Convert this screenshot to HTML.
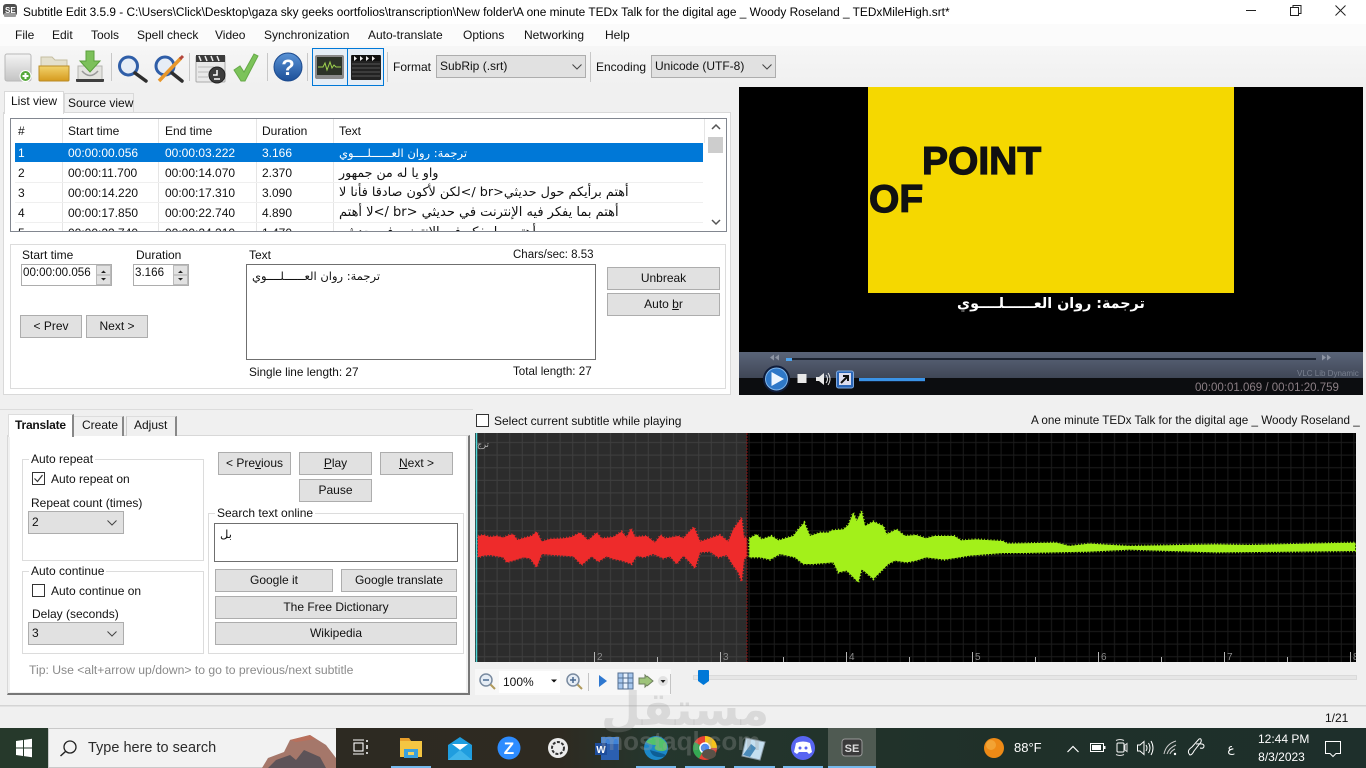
<!DOCTYPE html>
<html><head><meta charset="utf-8"><title>Subtitle Edit</title>
<style>
html,body{margin:0;padding:0;width:1366px;height:768px;overflow:hidden;background:#f0f0f0}
body{position:relative;font-family:"Liberation Sans","DejaVu Sans",sans-serif;font-size:12px;color:#111}
.a{position:absolute}
.t{position:absolute;white-space:nowrap;line-height:16px}
.b{position:absolute;background:#e1e1e1;border:1px solid #adadad;box-sizing:border-box;text-align:center;line-height:21px;white-space:nowrap}
.c{position:absolute;background:#e1e1e1;border:1px solid #adadad;box-sizing:border-box;line-height:20px;padding-left:3px;white-space:nowrap}
.c svg{position:absolute;right:6px;top:8px}
.g{position:absolute;border:1px solid #dcdcdc;box-sizing:border-box}
.g span{position:absolute;left:8px;top:-8px;background:#fff;padding:0 2px;line-height:14px;white-space:nowrap}
.sep{position:absolute;width:1px;background:#c8c8c8}
.r{position:absolute;left:4px;width:688px;height:20px;border-bottom:1px solid #efefef;box-sizing:border-box}
.r span{position:absolute;top:2px;line-height:16px;white-space:nowrap}
.ar{font-family:"DejaVu Sans",sans-serif;font-size:11.5px;direction:rtl;unicode-bidi:plaintext}
.m{position:absolute;top:27px;line-height:16px;white-space:nowrap}
svg{position:absolute;overflow:visible}
.ul{position:absolute;top:766px;height:2px;background:#76b9ed}
</style></head><body>

<!-- title bar -->
<div class="a" style="left:0;top:0;width:1366px;height:24px;background:#fff"></div>
<svg style="left:0;top:0" width="24" height="24"><rect x="3" y="4" width="14" height="12" rx="3" fill="#4e4e4e"/><rect x="4" y="13" width="12" height="4" rx="1" fill="#9a9a9a"/><text x="5" y="13" font-size="8" font-weight="bold" fill="#fff" font-family="Liberation Sans">SE</text></svg>
<div class="t" style="left:23px;top:4px;font-size:11.87px;color:#000">Subtitle Edit 3.5.9 - C:\Users\Click\Desktop\gaza sky geeks oortfolios\transcription\New folder\A one minute TEDx Talk for the digital age _ Woody Roseland _ TEDxMileHigh.srt*</div>
<svg style="left:1240px;top:0" width="126" height="24" fill="none" stroke="#222" stroke-width="1"><path d="M6 10.500H16"/><rect x="50.500" y="7.500" width="8" height="8"/><path d="M53 7.500V5.500H61V13.500H58.500"/><path d="M95.500 5.500L105.500 15.500M105.500 5.500L95.500 15.500"/></svg>

<!-- menu -->
<div class="a" style="left:0;top:24px;width:1366px;height:22px;background:#fbfbfb"></div>
<span class="m" style="left:15px">File</span><span class="m" style="left:52px">Edit</span><span class="m" style="left:91px">Tools</span><span class="m" style="left:137px">Spell check</span><span class="m" style="left:215px">Video</span><span class="m" style="left:264px">Synchronization</span><span class="m" style="left:368px">Auto-translate</span><span class="m" style="left:463px">Options</span><span class="m" style="left:524px">Networking</span><span class="m" style="left:605px">Help</span>

<!-- toolbar -->
<div class="a" style="left:0;top:46px;width:1366px;height:41px;background:linear-gradient(#f6f6f6,#f0f0f0)"></div>
<svg style="left:0;top:46px" width="400" height="41">
<defs>
<linearGradient id="gd" x1="0" y1="0" x2="0" y2="1"><stop offset="0" stop-color="#f4f4f4"/><stop offset="1" stop-color="#c4c4c4"/></linearGradient>
<linearGradient id="fo" x1="0" y1="0" x2="0" y2="1"><stop offset="0" stop-color="#f2d36c"/><stop offset="1" stop-color="#d59a1e"/></linearGradient>
<linearGradient id="bl" x1="0" y1="0" x2="0" y2="1"><stop offset="0" stop-color="#5a93d6"/><stop offset="1" stop-color="#1c4f98"/></linearGradient>
</defs>
<rect x="5" y="8" width="26" height="27" rx="2" fill="url(#gd)" stroke="#b8b8b8"/>
<circle cx="25.500" cy="30" r="5.500" fill="#55a83a" stroke="#fff"/><path d="M25.500 27V33M22.500 30H28.500" stroke="#fff" stroke-width="2"/>
<path d="M41 11H52L55 14H67V20H41Z" fill="#e4e0cd" stroke="#c5bea1"/>
<path d="M39 20H69V34Q69 35 68 35H40Q39 35 39 34Z" fill="url(#fo)" stroke="#b98c26"/>
<path d="M78 20H102V34H78Z" fill="#e3e3df" stroke="#b5b5b0"/>
<path d="M76 33H104V35Q104 36 103 36H77Q76 36 76 35Z" fill="#3f3f3f"/>
<path d="M82 25Q90 34 98 25" fill="none" stroke="#999" stroke-width="1.500"/>
<path d="M86 5H94V15H100L90 26L80 15H86Z" fill="#7cc05a" stroke="#5a9f3c"/>
<circle cx="128.500" cy="20" r="9" fill="#dfeaf7" fill-opacity=".7" stroke="#2f5ea8" stroke-width="3"/>
<path d="M135 27L146 35" stroke="#2e2e2e" stroke-width="3.500" stroke-linecap="round"/>
<circle cx="165" cy="20" r="9" fill="#dfeaf7" fill-opacity=".7" stroke="#2f5ea8" stroke-width="3"/>
<path d="M172 27L182 35" stroke="#2e2e2e" stroke-width="3.500" stroke-linecap="round"/>
<path d="M159 35L181 12" stroke="#e8972b" stroke-width="3.500"/><path d="M180 13L183 10" stroke="#b3463c" stroke-width="3"/>
<rect x="196" y="10" width="29" height="26" rx="1" fill="#e9e9e9" stroke="#aaa"/>
<rect x="196" y="9" width="29" height="7" fill="#3b3b3b"/>
<path d="M199 10l2 5M205 10l2 5M211 10l2 5M217 10l2 5" stroke="#eee" stroke-width="1.500"/>
<path d="M198 21h16M198 26h12M198 31h10" stroke="#bbb"/>
<circle cx="217" cy="29" r="8" fill="#3d3d3d" stroke="#222"/><path d="M217 24V29H213M214 33H220" stroke="#fff" stroke-width="1.500" fill="none"/>
<path d="M234 24L240 20L244 26L254 8L258 10L245 35H241Z" fill="#7cc35a" stroke="#66a948"/>
<circle cx="288" cy="21" r="14" fill="url(#bl)" stroke="#1d4b8e"/>
<text x="288" y="29" font-size="22" font-weight="bold" fill="#fff" text-anchor="middle" font-family="Liberation Sans">?</text>
<rect x="312.500" y="2.500" width="35" height="37" fill="#e6eef6" stroke="#0078d7"/>
<rect x="347.500" y="2.500" width="36" height="37" fill="#e6eef6" stroke="#0078d7"/>
<rect x="315" y="9" width="29" height="24" rx="2" fill="#8a8a8a"/>
<rect x="317" y="11" width="25" height="18" fill="#2d3328"/>
<path d="M318 21H323L325 17L327 24L330 16L332 22L334 19L336 21H341" fill="none" stroke="#9fd34e"/>
<rect x="351" y="9" width="30" height="25" rx="1" fill="#222"/>
<rect x="352" y="9" width="28" height="6" fill="#111"/>
<path d="M354 10l3 2.500l-3 2.500M360 10l3 2.500l-3 2.500M366 10l3 2.500l-3 2.500M372 10l3 2.500l-3 2.500" fill="#eee"/>
<path d="M352 18H380M352 22H380M352 26H380M352 30H380" stroke="#555"/>
</svg>
<div class="sep" style="left:111px;top:53px;height:28px"></div><div class="sep" style="left:189px;top:53px;height:28px"></div><div class="sep" style="left:267px;top:53px;height:28px"></div><div class="sep" style="left:307px;top:53px;height:28px"></div><div class="sep" style="left:387px;top:52px;height:30px"></div><div class="sep" style="left:590px;top:52px;height:30px"></div>
<div class="t" style="left:393px;top:59px">Format</div>
<div class="c" style="left:436px;top:55px;width:150px;height:23px">SubRip (.srt)<svg style="right:auto;left:135px;top:8px" width="10" height="6"><path d="M0.500 0.500L5 5L9.500 0.500" fill="none" stroke="#444"/></svg></div>
<div class="t" style="left:596px;top:59px">Encoding</div>
<div class="c" style="left:651px;top:55px;width:125px;height:23px">Unicode (UTF-8)<svg style="right:auto;left:110px;top:8px" width="10" height="6"><path d="M0.500 0.500L5 5L9.500 0.500" fill="none" stroke="#444"/></svg></div>

<!-- list panel -->
<div class="a" style="left:3px;top:112px;width:728px;height:283px;background:#fff;border:1px solid #d9d9d9;box-sizing:border-box"></div>
<div class="a" style="left:64px;top:93px;width:70px;height:20px;background:#f0f0f0;border:1px solid #d9d9d9;box-sizing:border-box"></div>
<div class="a" style="left:4px;top:91px;width:60px;height:23px;background:#fff;border:1px solid #d9d9d9;border-bottom:0;box-sizing:border-box"></div>
<div class="t" style="left:11px;top:93px">List view</div>
<div class="t" style="left:68px;top:95px">Source view</div>

<div class="a" style="left:10px;top:118px;width:717px;height:114px;background:#fff;border:1px solid #828790;box-sizing:border-box;overflow:hidden">
 <div class="a" style="left:51px;top:0;width:1px;height:112px;background:#e5e5e5"></div>
 <div class="a" style="left:147px;top:0;width:1px;height:112px;background:#e5e5e5"></div>
 <div class="a" style="left:245px;top:0;width:1px;height:112px;background:#e5e5e5"></div>
 <div class="a" style="left:322px;top:0;width:1px;height:112px;background:#e5e5e5"></div>
 <div class="a" style="left:693px;top:0;width:1px;height:24px;background:#e5e5e5"></div>
 <span class="t" style="left:7px;top:4px">#</span><span class="t" style="left:57px;top:4px">Start time</span><span class="t" style="left:154px;top:4px">End time</span><span class="t" style="left:251px;top:4px">Duration</span><span class="t" style="left:328px;top:4px">Text</span>
 <div class="r" style="top:24px;background:#0078d7;color:#fff;border:0;height:19px"><span style="left:3px">1</span><span style="left:53px">00:00:00.056</span><span style="left:150px">00:00:03.222</span><span style="left:247px">3.166</span><span class="ar" style="left:324px">ترجمة: روان العــــــلــــوي</span></div>
 <div class="r" style="top:44px"><span style="left:3px">2</span><span style="left:53px">00:00:11.700</span><span style="left:150px">00:00:14.070</span><span style="left:247px">2.370</span><span class="ar" style="left:324px;font-size:12.600px">واو يا له من جمهور</span></div>
 <div class="r" style="top:64px"><span style="left:3px">3</span><span style="left:53px">00:00:14.220</span><span style="left:150px">00:00:17.310</span><span style="left:247px">3.090</span><span class="ar" style="left:324px;font-size:12.800px">أهتم برأيكم حول حديثي&lt;br /&gt;لكن لأكون صادقا فأنا لا</span></div>
 <div class="r" style="top:84px"><span style="left:3px">4</span><span style="left:53px">00:00:17.850</span><span style="left:150px">00:00:22.740</span><span style="left:247px">4.890</span><span class="ar" style="left:324px;font-size:13px">أهتم بما يفكر فيه الإنترنت في حديثي &lt;br /&gt;لا أهتم</span></div>
 <div class="r" style="top:104px;border:0"><span style="left:3px">5</span><span style="left:53px">00:00:22.740</span><span style="left:150px">00:00:24.210</span><span style="left:247px">1.470</span><span class="ar" style="left:324px;font-size:13px">أهتم بما يفكر فيه الإنترنت في حديثي</span></div>
 <div class="a" style="left:697px;top:18px;width:15px;height:16px;background:#cdcdcd"></div>
 <svg style="left:700px;top:5px" width="10" height="6"><path d="M1 5L5 1L9 5" fill="none" stroke="#555" stroke-width="1.500"/></svg>
 <svg style="left:700px;top:100px" width="10" height="6"><path d="M1 1L5 5L9 1" fill="none" stroke="#555" stroke-width="1.500"/></svg>
</div>

<!-- edit panel -->
<div class="a" style="left:10px;top:244px;width:716px;height:145px;border:1px solid #dcdcdc;box-sizing:border-box"></div>
<div class="t" style="left:22px;top:247px">Start time</div>
<div class="t" style="left:136px;top:247px">Duration</div>
<div class="a" style="left:21px;top:264px;width:91px;height:22px;background:#fff;border:1px solid #adadad;box-sizing:border-box"></div>
<div class="t" style="left:23px;top:265px;font-size:11.600px">00:00:00.056</div>
<div class="a" style="left:96px;top:265px;width:15px;height:20px;background:#e1e1e1;border:1px solid #bbb;box-sizing:border-box"></div>
<div class="a" style="left:133px;top:264px;width:56px;height:22px;background:#fff;border:1px solid #adadad;box-sizing:border-box"></div>
<div class="t" style="left:135px;top:265px;font-size:11.600px">3.166</div>
<div class="a" style="left:173px;top:265px;width:15px;height:20px;background:#e1e1e1;border:1px solid #bbb;box-sizing:border-box"></div>
<svg style="left:96px;top:265px" width="92" height="20"><path d="M7.500 5.500L5 8H10ZM7.500 15.500L5 13H10ZM84.500 5.500L82 8H87ZM84.500 15.500L82 13H87Z" fill="#222"/><path d="M1 10H14M78 10H91" stroke="#aaa"/></svg>
<div class="b" style="left:20px;top:315px;width:62px;height:23px">&lt; Prev</div>
<div class="b" style="left:86px;top:315px;width:62px;height:23px">Next &gt;</div>
<div class="t" style="left:249px;top:247px">Text</div>
<div class="t" style="left:513px;top:247px;font-size:11.500px">Chars/sec: 8.53</div>
<div class="a" style="left:246px;top:264px;width:350px;height:96px;background:#fff;border:1px solid #6f6f6f;box-sizing:border-box"></div>
<div class="t ar" style="left:252px;top:268px">ترجمة: روان العــــــلــــوي</div>
<div class="t" style="left:249px;top:364px;font-size:11.800px">Single line length: 27</div>
<div class="t" style="left:513px;top:364px;font-size:11.600px">Total length: 27</div>
<div class="b" style="left:607px;top:267px;width:113px;height:23px">Unbreak</div>
<div class="b" style="left:607px;top:293px;width:113px;height:23px">Auto <u>b</u>r</div>

<!-- video -->
<div class="a" style="left:739px;top:87px;width:624px;height:308px;background:#000"></div>
<div class="a" style="left:868px;top:87px;width:366px;height:206px;background:#f5d800"></div>
<div class="t" style="left:922px;top:141px;font:900 39px/42px 'Liberation Sans',sans-serif;color:#111;-webkit-text-stroke:1.200px #111">POINT</div>
<div class="t" style="left:869px;top:179px;font:900 39px/42px 'Liberation Sans',sans-serif;color:#111;-webkit-text-stroke:1.200px #111">OF</div>
<div class="t" style="left:957px;top:293px;font:bold 14.300px/22px 'DejaVu Sans',sans-serif;color:#fff;direction:rtl;unicode-bidi:plaintext">ترجمة: روان العــــــلــــوي</div>
<div class="a" style="left:739px;top:352px;width:624px;height:26px;background:linear-gradient(#5a6478,#3f4656)"></div>
<div class="a" style="left:739px;top:378px;width:624px;height:17px;background:#0c0d10"></div>
<div class="a" style="left:786px;top:358px;width:530px;height:2px;background:#1c2330"></div>
<div class="a" style="left:786px;top:358px;width:6px;height:3px;background:#4ea4ee"></div>
<svg style="left:739px;top:353px" width="624" height="42">
<path d="M31 4.500L35 1.500V7.500ZM36 4.500L40 1.500V7.500Z" fill="#8e95a4"/><path d="M583 1.500L587 4.500L583 7.500ZM588 1.500L592 4.500L588 7.500Z" fill="#8e95a4"/>
<circle cx="37.500" cy="26" r="13.500" fill="#0f1c3a"/><circle cx="37.500" cy="26" r="11" fill="#2f78c8" stroke="#7fb5ea"/>
<path d="M32.500 19V33L45 26Z" fill="#eef6ff"/>
<rect x="58.500" y="21" width="9" height="9" fill="#e8e8e8"/>
<path d="M77 24H80L85 20V32L80 28H77Z" fill="#e8e8e8"/><path d="M87 22Q90 26 87 30M89 20Q93 26 89 32" fill="none" stroke="#e8e8e8"/>
<rect x="97.500" y="18" width="17" height="17" rx="2" fill="#2a66b8" stroke="#7fa8dc"/><rect x="100" y="20" width="12" height="12" fill="#dde"/><path d="M102 30L108 24M104 23H109V28" stroke="#111" stroke-width="2" fill="none"/>
<rect x="120" y="25" width="66" height="3" fill="#3b93e6"/><rect x="120" y="28" width="66" height="1" fill="#14233d"/>
</svg>
<div class="t" style="left:1297px;top:366px;font-size:8px;color:#7a8190">VLC Lib Dynamic</div>
<div class="t" style="left:1195px;top:380px;font-size:11.500px;color:#8c7f85">00:00:01.069 / 00:01:20.759</div>

<!-- lower left -->
<div class="a" style="left:0;top:409px;width:473px;height:1px;background:#dcdcdc"></div>
<div class="a" style="left:7px;top:435px;width:463px;height:260px;background:#f0f0f0;border-top:1px solid #d8d8d8;border-left:1px solid #d8d8d8;border-bottom:2px solid #777;border-right:2px solid #777;box-sizing:border-box"></div>
<div class="a" style="left:10px;top:436px;width:456px;height:256px;background:#fff"></div>
<div class="a" style="left:74px;top:416px;width:50px;height:20px;background:#f0f0f0;border-top:1px solid #ddd;border-right:2px solid #888;box-sizing:border-box"></div>
<div class="a" style="left:126px;top:416px;width:51px;height:20px;background:#f0f0f0;border-top:1px solid #ddd;border-left:1px solid #ccc;border-right:2px solid #888;box-sizing:border-box"></div>
<div class="a" style="left:8px;top:414px;width:66px;height:23px;background:#fff;border:1px solid #ddd;border-right:2px solid #888;border-bottom:0;box-sizing:border-box"></div>
<div class="t" style="left:15px;top:417px;font-weight:bold;letter-spacing:-.2px">Translate</div>
<div class="t" style="left:82px;top:417px">Create</div>
<div class="t" style="left:134px;top:417px">Adjust</div>

<div class="g" style="left:22px;top:459px;width:182px;height:102px"><span style="left:6px">Auto repeat</span></div>
<div class="g" style="left:22px;top:571px;width:182px;height:83px"><span style="left:6px">Auto continue</span></div>
<div class="g" style="left:208px;top:513px;width:256px;height:141px"><span style="left:6px">Search text online</span></div>
<svg style="left:32px;top:472px" width="14" height="14"><rect x="0.500" y="0.500" width="12" height="12" fill="#fff" stroke="#333"/><path d="M2.500 6.500L5.500 9.500L10.500 3" fill="none" stroke="#333" stroke-width="1.200"/></svg>
<div class="t" style="left:51px;top:471px">Auto repeat on</div>
<div class="t" style="left:31px;top:495px">Repeat count (times)</div>
<div class="c" style="left:28px;top:511px;width:96px;height:23px">2<svg width="10" height="6"><path d="M0.500 0.500L5 5L9.500 0.500" fill="none" stroke="#444"/></svg></div>
<svg style="left:32px;top:584px" width="14" height="14"><rect x="0.500" y="0.500" width="12" height="12" fill="#fff" stroke="#333"/></svg>
<div class="t" style="left:51px;top:583px">Auto continue on</div>
<div class="t" style="left:32px;top:606px">Delay (seconds)</div>
<div class="c" style="left:28px;top:622px;width:96px;height:23px">3<svg width="10" height="6"><path d="M0.500 0.500L5 5L9.500 0.500" fill="none" stroke="#444"/></svg></div>
<div class="b" style="left:218px;top:452px;width:73px;height:23px">&lt; Pre<u>v</u>ious</div>
<div class="b" style="left:299px;top:452px;width:73px;height:23px"><u>P</u>lay</div>
<div class="b" style="left:380px;top:452px;width:73px;height:23px"><u>N</u>ext &gt;</div>
<div class="b" style="left:299px;top:479px;width:73px;height:23px">Pause</div>
<div class="a" style="left:214px;top:523px;width:244px;height:39px;background:#fff;border:1px solid #6f6f6f;box-sizing:border-box"></div>
<div class="t ar" style="left:220px;top:526px">بل</div>
<div class="b" style="left:215px;top:569px;width:118px;height:23px">Google it</div>
<div class="b" style="left:341px;top:569px;width:116px;height:23px">Google translate</div>
<div class="b" style="left:215px;top:596px;width:242px;height:23px">The Free Dictionary</div>
<div class="b" style="left:215px;top:622px;width:242px;height:23px">Wikipedia</div>
<div class="t" style="left:29px;top:662px;color:#8a8a8a;font-size:12.200px">Tip: Use &lt;alt+arrow up/down&gt; to go to previous/next subtitle</div>

<!-- waveform header -->
<svg style="left:476px;top:414px" width="14" height="14"><rect x="0.500" y="0.500" width="12" height="12" fill="#fff" stroke="#333"/></svg>
<div class="t" style="left:494px;top:413px">Select current subtitle while playing</div>
<div class="a" style="left:1031px;top:413px;width:329px;height:16px;overflow:hidden"><div class="t" style="left:0;top:0;font-size:11.700px">A one minute TEDx Talk for the digital age _ Woody Roseland _ TEDxMileHigh</div></div>

<!-- waveform -->
<svg style="left:0;top:0" width="1366" height="768">
<defs>
<pattern id="g1" x="476" y="433" width="12.600" height="12.600" patternUnits="userSpaceOnUse"><rect width="12.600" height="12.600" fill="#2c2c2c"/><path d="M8.500 0V12.600M0 9.500H12.600" stroke="#3e3e3e"/></pattern>
<pattern id="g2" x="476" y="433" width="12.600" height="12.600" patternUnits="userSpaceOnUse"><rect width="12.600" height="12.600" fill="#000"/><path d="M8.500 0V12.600M0 9.500H12.600" stroke="#1b1b1b"/></pattern>
</defs>
<rect x="475" y="433" width="272" height="229" fill="url(#g1)"/>
<rect x="747" y="433" width="609" height="229" fill="url(#g2)"/>
<g transform="translate(470,430) scale(.33333)">
<polygon fill="#ee2b2b" stroke="#ee2b2b" stroke-width="7" stroke-dasharray="2.500 7" points="24,318 40,315 60,321 80,318 100,323 118,315 130,313 142,330 165,323 185,318 200,305 215,335 240,327 280,325 305,321 330,308 355,331 380,308 395,325 430,321 455,305 470,323 483,295 495,321 530,318 555,338 572,315 585,325 600,323 625,318 640,325 660,303 672,291 690,335 720,325 750,315 775,335 790,298 815,263 822,323 830,323 830,379 822,389 815,455 805,427 790,407 770,375 745,382 720,365 690,367 675,415 655,392 640,377 620,402 600,379 580,385 550,372 520,382 500,377 485,402 455,392 430,387 410,379 385,395 365,379 335,405 310,379 280,377 250,375 215,372 200,412 180,385 160,382 130,392 110,397 100,382 60,375 40,377 24,382"/>
<polygon fill="#a3f01a" stroke="#a3f01a" stroke-width="7" stroke-dasharray="2.500 7" points="838,325 860,313 875,328 905,318 925,331 970,318 985,298 1003,278 1020,318 1050,308 1075,308 1085,301 1120,298 1135,285 1150,248 1160,273 1175,243 1185,288 1210,275 1240,288 1250,313 1280,298 1305,318 1338,315 1368,325 1393,318 1453,318 1473,331 1518,328 1598,333 1613,341 1758,338 1798,348 1858,341 1978,348 2238,343 2338,345 2656,338 2656,363 2468,365 2238,367 1978,359 1858,365 1658,369 1598,369 1498,377 1468,382 1423,389 1368,382 1338,392 1310,397 1275,392 1255,402 1210,447 1175,417 1165,457 1130,422 1105,427 1090,397 1030,402 1000,402 975,382 930,372 900,389 870,382 838,382"/>
</g>
<path d="M747 433V662" stroke="#8a1010" stroke-dasharray="2 1"/>
<path d="M476.500 433V662" stroke="#4fd8d8" stroke-width="1.500"/>
<path d="M594.500 652V662M720.500 652V662M846.500 652V662M972.500 652V662M1098.500 652V662M1224.500 652V662M1350.500 652V662M657.500 657V662M783.500 657V662M909.500 657V662M1035.500 657V662M1161.500 657V662M1287.500 657V662" stroke="#b5b5b5"/>
<g font-size="10" fill="#8a8a8a" font-family="Liberation Sans"><text x="597" y="660">2</text><text x="723" y="660">3</text><text x="849" y="660">4</text><text x="975" y="660">5</text><text x="1101" y="660">6</text><text x="1227" y="660">7</text><text x="1353" y="660">8</text></g>
<text x="477" y="447" font-size="8" fill="#bbb" font-family="DejaVu Sans">ترج</text>
<rect x="1356" y="433" width="10" height="229" fill="#f0f0f0"/>
</svg>

<!-- waveform toolbar -->
<div class="a" style="left:475px;top:669px;width:196px;height:26px;background:#f7f7f7"></div>
<div class="a" style="left:499px;top:671px;width:61px;height:22px;background:#fff"></div>
<div class="t" style="left:503px;top:674px">100%</div>
<svg style="left:475px;top:669px" width="200" height="26">
<path d="M76 10.500H82L79 13.500Z" fill="#111"/>
<circle cx="11" cy="11" r="6" fill="#e6edf5" stroke="#7a8ba0" stroke-width="1.500"/><path d="M8 11H14" stroke="#4a6a90" stroke-width="1.500"/><path d="M15.500 15.500L20 20" stroke="#b09a5c" stroke-width="2"/>
<circle cx="98" cy="11" r="6" fill="#e6edf5" stroke="#7a8ba0" stroke-width="1.500"/><path d="M95 11H101M98 8V14" stroke="#4a6a90" stroke-width="1.500"/><path d="M102.500 15.500L107 20" stroke="#b09a5c" stroke-width="2"/>
<path d="M113.500 4V22" stroke="#c4c4c4"/>
<path d="M124 6V18L132 12Z" fill="#2f78d0"/>
<rect x="143" y="4" width="15" height="16" fill="#a8c8ee" stroke="#546f92"/><rect x="148" y="4" width="5" height="16" fill="#e9f2fc" stroke="#546f92"/><path d="M143 9H158M143 14H158" stroke="#546f92"/>
<path d="M164 9H170V6L176 12L170 18V15H164Z" fill="#9ec47a" stroke="#6e7f5e"/><path d="M172 7L178 12L172 17" fill="#9ec47a" stroke="#6e7f5e"/>
<circle cx="188" cy="12" r="5" fill="#e2e2e2"/><path d="M185.500 11H190.500L188 14Z" fill="#222"/>
<path d="M195.500 5V25" stroke="#c4c4c4"/>
</svg>
<div class="a" style="left:693px;top:675px;width:662px;height:3px;background:#e6e6e6;border:1px solid #dadada"></div>
<svg style="left:698px;top:670px" width="12" height="16"><path d="M0 1Q0 0 1 0H10Q11 0 11 1V11L5.500 15L0 11Z" fill="#0078d7"/></svg>

<!-- status -->
<div class="a" style="left:0;top:705px;width:1366px;height:1px;background:#d4d4d4"></div>
<div class="a" style="left:0;top:706px;width:1366px;height:1px;background:#e2e2e2"></div>
<div class="t" style="left:1325px;top:710px">1/21</div>

<!-- taskbar -->
<div class="a" style="left:0;top:728px;width:1366px;height:40px;background:linear-gradient(90deg,#26392b 0,#26392b 48px,#2d2a22 336px,#2e2a21 560px,#25362d 650px,#1f3029 1000px,#1e2f2b 1366px)"></div>
<div class="a" style="left:48px;top:728px;width:288px;height:40px;background:#f2f2f2;border:1px solid #c9c9c9;border-right:0;box-sizing:border-box"></div>
<svg style="left:0;top:728px" width="1366" height="40">
<path d="M16 13L23 12V19.500H16ZM24 11.900L32 10.800V19.500H24ZM16 20.500H23V28L16 27ZM24 20.500H32V29.200L24 28.100Z" fill="#fff"/>
<circle cx="70" cy="19" r="6" fill="none" stroke="#222" stroke-width="1.300"/><path d="M65.500 23.500L60.500 28" stroke="#222" stroke-width="1.500"/>
<path d="M262 40L268 30L284 24L290 12L310 7L326 17L336 30V40Z" fill="#a5776a"/><path d="M268 40L276 32L290 27L296 32L304 22L320 29L326 40Z" fill="#5d5358"/><path d="M290 12L310 7L316 11L296 14Z" fill="#b9705c"/>
<g fill="none" stroke="#fff" stroke-width="1.100"><rect x="354" y="15" width="9" height="8"/><path d="M353 12H364M353 26H364"/><path d="M367 12V14M367 17V21M367 24V26" stroke-width="1.500"/></g>
<path d="M400 10H409L411 13H422V29H400Z" fill="#f4c542"/><path d="M400 10H409L411 13H400Z" fill="#e89f2b"/><rect x="404" y="21" width="14" height="9" fill="#3aa0dc"/><rect x="408" y="24" width="6" height="3" fill="#f4d35e"/>
<path d="M448 17L460 9L472 17V32H448Z" fill="#1f9ddf"/><path d="M452 16H468L460 22Z" fill="#fff"/><path d="M448 32L460 22L472 32Z" fill="#3fb4ea"/>
<circle cx="509" cy="20" r="11.500" fill="#2d8cff"/><text x="509" y="26" font-size="17" font-weight="bold" fill="#fff" text-anchor="middle" font-family="Liberation Sans">Z</text>
<circle cx="558" cy="20" r="10" fill="#ececec"/><circle cx="558" cy="20" r="6" fill="none" stroke="#333" stroke-width="2" stroke-dasharray="3 1.500"/>
<rect x="601" y="9" width="18" height="23" fill="#2b5fb0"/><rect x="601" y="9" width="18" height="7" fill="#3f83d8"/><rect x="595" y="15" width="12" height="12" fill="#1e4d9c"/><text x="601" y="25" font-size="10" font-weight="bold" fill="#fff" text-anchor="middle" font-family="Liberation Sans">W</text>
<circle cx="656" cy="20" r="12" fill="#1c88c9"/><path d="M646 14A12 12 0 0 1 667 17Q668 24 660 23Q652 22 656 17Q650 17 646 14Z" fill="#53c26b"/><path d="M650 22Q652 30 662 29Q668 28 664 26" fill="#0d5e96"/>
<circle cx="705" cy="20" r="12" fill="#e44335"/><path d="M705 20L694.500 14A12 12 0 0 0 699 30.500Z" fill="#34a853"/><path d="M705 8A12 12 0 0 1 717 20H705Z" fill="#f6c31b"/><circle cx="705" cy="20" r="5" fill="#4a8af4" stroke="#fff" stroke-width="1.500"/><ellipse cx="709" cy="26" rx="7" ry="5" fill="#5a5147"/>
<path d="M746 10L765 14L760 32L742 28Z" fill="#c5dff0" stroke="#8a9aa5"/><path d="M743 27L751 16L756 20L750 29Z" fill="#4a8ab8"/>
<circle cx="803" cy="20" r="12" fill="#5865f2"/><path d="M796 15Q803 12 810 15L812 24L809 26L807 24H799L797 26L794 24Z" fill="#fff"/><circle cx="800" cy="20" r="1.500" fill="#5865f2"/><circle cx="806" cy="20" r="1.500" fill="#5865f2"/>
<rect x="828" y="0" width="48" height="40" fill="#4f5a52"/>
<rect x="842" y="11" width="20" height="17" rx="3" fill="#3a3a3a" stroke="#999"/><text x="852" y="24" font-size="11" font-weight="bold" fill="#ddd" text-anchor="middle" font-family="Liberation Sans">SE</text>
<circle cx="994" cy="20" r="10" fill="#ee8a16"/><circle cx="991" cy="17" r="5" fill="#f2a93c" fill-opacity=".8"/>
<path d="M1067.500 24L1073 18.500L1078.500 24" fill="none" stroke="#fff" stroke-width="1.200"/>
<rect x="1090.500" y="15.500" width="13" height="8" fill="none" stroke="#fff"/><rect x="1092" y="17" width="9" height="5" fill="#fff"/><rect x="1104" y="18" width="1.500" height="3" fill="#fff"/>
<rect x="1117" y="15" width="7" height="9" rx="1" fill="none" stroke="#fff"/><path d="M1125 17L1127 15.500V23.500L1125 22ZM1116 12.500Q1120 10.500 1124 12.500M1116 26.500Q1120 28.500 1124 26.500" fill="none" stroke="#ddd"/>
<path d="M1137.500 17H1140L1144 13.500V26.500L1140 23H1137.500Z" fill="none" stroke="#fff"/><path d="M1146 17Q1148 20 1146 23M1148.500 15Q1151.500 20 1148.500 25M1151 13Q1155 20 1151 27" fill="none" stroke="#fff"/>
<path d="M1164 26Q1166 16 1176 13M1167 26Q1169 20 1176 17M1170 26Q1171 23 1175 21" fill="none" stroke="#ccc"/><circle cx="1175" cy="26" r="1.200" fill="#fff"/>
<path d="M1190 27Q1186 23 1192 19L1199 11Q1202 10 1201 14L1194 23Q1192 27 1190 27ZM1196 16Q1204 15 1204 18Q1204 21 1200 20" fill="none" stroke="#fff"/>
<text x="1231" y="24" font-size="12" fill="#fff" text-anchor="middle" font-family="DejaVu Sans">ع</text>
<path d="M1325.500 13.500H1340.500V25.500H1336L1333 28.500L1330 25.500H1325.500Z" fill="none" stroke="#fff"/>
</svg>
<div class="t" style="left:88px;top:740px;font-size:14.500px;color:#2b2b2b">Type here to search</div>
<div class="t" style="left:1014px;top:740px;font-size:13px;color:#fff">88°F</div>
<div class="t" style="left:1258px;top:731px;color:#fff;width:47px;text-align:center">12:44 PM</div>
<div class="t" style="left:1258px;top:749px;color:#fff;width:47px;text-align:center">8/3/2023</div>
<div class="ul" style="left:391px;width:40px"></div><div class="ul" style="left:636px;width:40px"></div><div class="ul" style="left:685px;width:40px"></div><div class="ul" style="left:734px;width:41px"></div><div class="ul" style="left:783px;width:40px"></div><div class="ul" style="left:828px;width:48px"></div>

<!-- watermark -->
<div class="t" style="left:601px;top:674px;font:bold 46px/70px 'DejaVu Sans',sans-serif;color:rgba(150,150,150,.26)">مستقل</div>
<div class="t" style="left:600px;top:727px;font:bold 26px/28px 'Liberation Sans',sans-serif;color:rgba(160,160,160,.3)">mostaql.com</div>
</body></html>
